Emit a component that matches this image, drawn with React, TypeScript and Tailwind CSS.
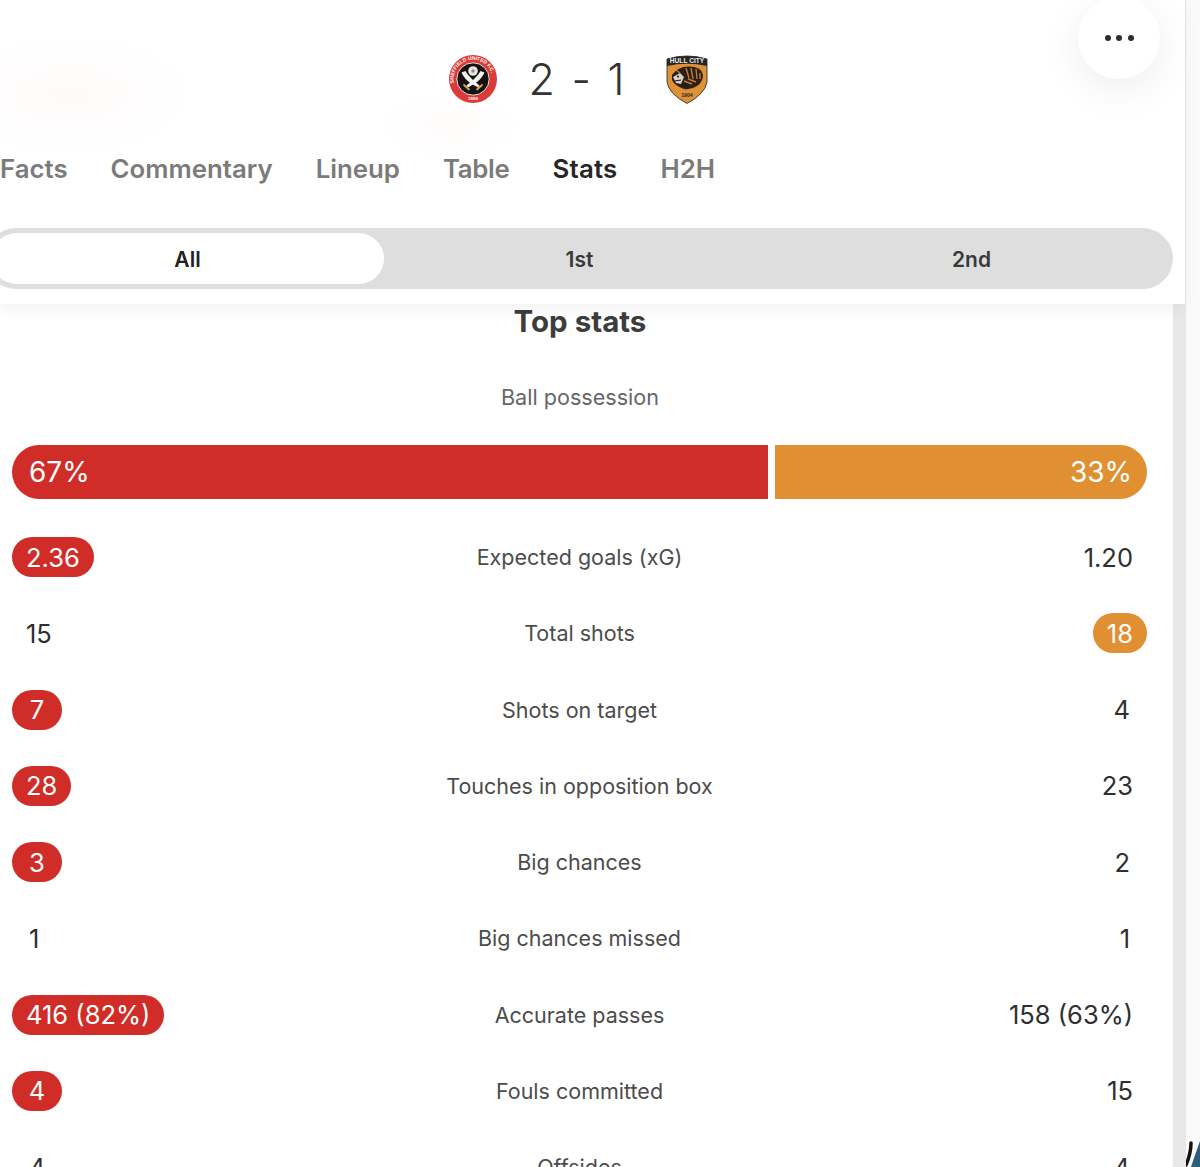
import React from "react";

function Sheffield() {
  return (
    <svg width="50" height="50" viewBox="0 0 50 50" className="shrink-0">
      <defs>
        <path id="arcTop" d="M6.2 30 A19.4 19.4 0 1 1 43.8 30" />
      </defs>
      <circle cx="25" cy="25" r="24" fill="#dc3a36" />
      <circle cx="25" cy="25" r="16.2" fill="#141212" stroke="#f4dcd8" strokeWidth="1" />
      <text fontSize="5" fontWeight="700" fill="#fff" fontFamily="'Liberation Sans', sans-serif" textLength="58">
        <textPath href="#arcTop" startOffset="1">SHEFFIELD UNITED F.C.</textPath>
      </text>
      <text x="25" y="46" textAnchor="middle" fontSize="4.4" fontWeight="700" fill="#fff" fontFamily="'Liberation Sans', sans-serif">1889</text>
      <circle cx="25" cy="17" r="4.8" fill="#e9e5df" />
      <circle cx="25" cy="17" r="1.7" fill="#8f8a84" />
      <path d="M13.5 18.5 C16 25 23 30 30 33.5 L31.5 31.5 C26 27 20 22 17.5 17 Z" fill="#f4f2ee" />
      <path d="M36.5 18.5 C34 25 27 30 20 33.5 L18.5 31.5 C24 27 30 22 32.5 17 Z" fill="#f4f2ee" />
      <path d="M16 31 L21 35.5 M34 31 L29 35.5" stroke="#d7b24a" strokeWidth="1.7" strokeLinecap="round" />
    </svg>
  );
}

function Hull() {
  return (
    <svg width="42" height="50" viewBox="0 0 42 50" className="shrink-0">
      <path d="M1 5 Q21 -1 41 5 L41 28 Q39 40 21 49.5 Q3 40 1 28 Z" fill="#df9235" stroke="#241f1b" strokeWidth="0.8" />
      <path d="M1 5 Q21 -1 41 5 L41 12 Q21 7.5 1 12 Z" fill="#25252c" />
      <text x="21" y="9.4" textAnchor="middle" fontSize="6.6" fontWeight="700" fill="#efe9dc" fontFamily="'Liberation Sans', sans-serif">HULL CITY</text>
      <path d="M6 21 Q12 12 24 12.5 Q36 13 37 21 Q37 28 31 32 Q25 36 18 35 Q9 32 6 26 Z" fill="#2a1e17" />
      <path d="M7 23 L14 19 L18 23 L15 30 L10 29 Z" fill="#d8d2c6" />
      <path d="M10 16 L14 19 M20 14 L23 24 M25 14 L27 25 M30 15 L31 25 M34 19 L34 25 M18 27 L26 30 M22 25 L30 28" stroke="#c47d2b" strokeWidth="1.4" />
      <path d="M9 27 L15 26" stroke="#1f150f" strokeWidth="1.2" />
      <circle cx="12" cy="22.5" r="1" fill="#191512" />
      <text x="21" y="43" textAnchor="middle" fontSize="5.2" fontWeight="700" fill="#25252c" fontFamily="'Liberation Sans', sans-serif">1904</text>
    </svg>
  );
}

type Row = { label: string; l: string; r: string; hl?: "l" | "r" };
const rows: Row[] = [
  { label: "Expected goals (xG)", l: "2.36", r: "1.20", hl: "l" },
  { label: "Total shots", l: "15", r: "18", hl: "r" },
  { label: "Shots on target", l: "7", r: "4", hl: "l" },
  { label: "Touches in opposition box", l: "28", r: "23", hl: "l" },
  { label: "Big chances", l: "3", r: "2", hl: "l" },
  { label: "Big chances missed", l: "1", r: "1" },
  { label: "Accurate passes", l: "416 (82%)", r: "158 (63%)", hl: "l" },
  { label: "Fouls committed", l: "4", r: "15", hl: "l" },
  { label: "Offsides", l: "4", r: "4" },
];

function Val({ v, color, end }: { v: string; color?: "red" | "orange"; end?: boolean }) {
  const bg = color === "red" ? "min-w-[50px] bg-[#d12d28] text-white" : color === "orange" ? "min-w-[50px] bg-[#e08f32] text-white" : "text-[#2f2f2f]";
  const single = !color && v.length === 1;
  return (
    <span className={`inline-flex h-10 items-center justify-center rounded-full pt-[1px] text-[25.5px] ${single ? "px-[17px]" : "px-[14px]"} ${end ? "justify-self-end" : "justify-self-start"} ${bg}`}>{v}</span>
  );
}

const tabs = [
  { t: "Facts", c: "" },
  { t: "Commentary", c: "" },
  { t: "Lineup", c: "" },
  { t: "Table", c: "tracking-[-0.3px]" },
  { t: "Stats", c: "tracking-[0.2px] text-[#262626]" },
  { t: "H2H", c: "" },
];

export default function App() {
  return (
    <div className="flex h-[1167px] w-[1200px] overflow-hidden bg-white font-['Inter','Liberation_Sans',sans-serif]">
      <div className="h-full w-[1186px] shrink-0 border-r border-[#e6e6e6]">
        <header className="relative z-10 h-[304px] bg-[radial-gradient(ellipse_120px_60px_at_70px_95px,#fffafa,#ffffff00),radial-gradient(ellipse_70px_35px_at_450px_125px,#fffcfb,#ffffff00)] bg-white shadow-[0_6px_14px_rgba(0,0,0,0.05)]">
          <div className="flex h-[142px] items-start justify-center pr-[29px]">
            <div className="mt-[52px] flex items-center">
              <Sheffield />
              <span className="mr-[41.5px] ml-[30.5px] w-[96px] text-center text-[43px] leading-[54px] font-light tracking-[1px] whitespace-nowrap text-[#333] [word-spacing:2.5px]">2 - 1</span>
              <Hull />
            </div>
          </div>
          <button className="absolute top-[-3px] left-[1078px] flex h-[82px] w-[82px] items-center justify-center gap-[5.5px] rounded-full bg-white shadow-[0_10px_40px_rgba(0,0,0,0.07)]">
            <span className="h-[6px] w-[6px] rounded-full bg-[#2d2d2d]" />
            <span className="h-[6px] w-[6px] rounded-full bg-[#2d2d2d]" />
            <span className="h-[6px] w-[6px] rounded-full bg-[#2d2d2d]" />
          </button>
          <nav className="flex h-[54px] items-center gap-[43px] text-[25.8px] font-semibold text-[#7b7b7b]">
            {tabs.map(({ t, c }) => (
              <span key={t} className={c}>{t}</span>
            ))}
          </nav>
          <div className="mt-[32px] ml-[-14px] flex h-[61px] w-[1187px] rounded-full bg-[#dedede] p-[5px] text-[21px] font-semibold text-[#3a3a3a]">
            <div className="flex w-[393px] items-center justify-center rounded-full bg-white pt-[2px] text-[#222]">All</div>
            <div className="flex w-[391px] items-center justify-center pt-[2px]">1st</div>
            <div className="flex w-[393px] items-center justify-center pt-[2px]">2nd</div>
          </div>
        </header>
        <main className="flex h-[863px] w-[1185px]">
          <div className="w-[1173px] shrink-0 bg-white">
            <h2 className="w-[1160px] text-center text-[29.5px] leading-[34px] font-bold text-[#3d3d3d]">Top stats</h2>
            <p className="mt-[44px] w-[1160px] text-center text-[21.6px] leading-[30px] text-[#666]">Ball possession</p>
            <div className="mt-[33px] ml-[12px] flex h-[54px] w-[1135px] text-[28px] text-white">
              <div className="flex w-[756px] items-center rounded-l-[27px] bg-[#d12d28] pl-[17px]">67%</div>
              <div className="ml-[7px] flex w-[372px] items-center justify-end rounded-r-[27px] bg-[#e08f32] pr-[15px]">33%</div>
            </div>
            <div className="mt-[20px] ml-[12px] w-[1135px]">
              {rows.map((r) => (
                <div key={r.label} className="grid h-[76.25px] grid-cols-[1fr_auto_1fr] items-center">
                  <Val v={r.l} color={r.hl === "l" ? "red" : undefined} />
                  <span className="text-center text-[21.5px] text-[#4c4c4c]">{r.label}</span>
                  <Val v={r.r} color={r.hl === "r" ? "orange" : undefined} end />
                </div>
              ))}
            </div>
          </div>
          <div className="h-full flex-1 bg-[#e8e8e8]" />
        </main>
      </div>
      <div className="relative flex-1 bg-[#fafafa]">
        <svg className="absolute right-0 bottom-0" width="14" height="26" viewBox="0 0 14 26">
          <path d="M14 0 V26 H5 Q9 14 14 0 Z" fill="#2c5f7f" />
          <path d="M5 2 Q5 12 0 24" fill="none" stroke="#111" strokeWidth="3.5" strokeLinecap="round" />
        </svg>
      </div>
    </div>
  );
}
